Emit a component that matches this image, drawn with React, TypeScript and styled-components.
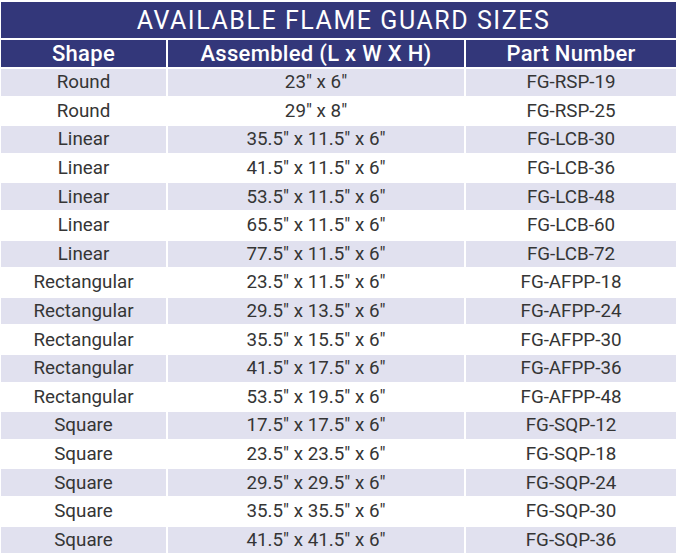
import React from 'react'
import styled, { createGlobalStyle } from 'styled-components'

const GlobalStyle = createGlobalStyle`
  html, body {
    margin: 0;
    padding: 0;
    background: #ffffff;
  }
  body {
    font-family: Roboto, "Liberation Sans", sans-serif;
  }
`

const NAVY = '#33377a'
const LAVENDER = '#e1e1ef'

const Page = styled.div`
  width: 679px;
  height: 557px;
  padding: 2px 3px 0 1px;
  box-sizing: border-box;
  background: #ffffff;
`

const Grid = styled.div`
  display: grid;
  grid-template-columns: 165px 296px 210px;
  grid-template-rows: 36px 27px;
  grid-auto-rows: 26.6px;
  column-gap: 2px;
  row-gap: 2px;
`

const Title = styled.div`
  grid-column: 1 / span 3;
  background: ${NAVY};
  color: #ffffff;
  display: flex;
  align-items: center;
  justify-content: center;
  font-size: 25px;
  font-weight: 400;
  letter-spacing: 1.55px;
  padding-left: 10px;
`

const HeadCell = styled.div`
  background: ${NAVY};
  color: #ffffff;
  display: flex;
  align-items: center;
  justify-content: center;
  font-size: 22px;
  font-weight: 500;
  letter-spacing: 0.3px;
`

const Cell = styled.div<{ $shaded: boolean }>`
  background: ${({ $shaded }) => ($shaded ? LAVENDER : '#ffffff')};
  color: #353535;
  display: flex;
  align-items: center;
  justify-content: center;
  font-size: 18.8px;
  font-weight: 400;
`

const rows: [string, string, string][] = [
  ['Round', '23″ x 6″', 'FG-RSP-19'],
  ['Round', '29″ x 8″', 'FG-RSP-25'],
  ['Linear', '35.5″ x 11.5″ x 6″', 'FG-LCB-30'],
  ['Linear', '41.5″ x 11.5″ x 6″', 'FG-LCB-36'],
  ['Linear', '53.5″ x 11.5″ x 6″', 'FG-LCB-48'],
  ['Linear', '65.5″ x 11.5″ x 6″', 'FG-LCB-60'],
  ['Linear', '77.5″ x 11.5″ x 6″', 'FG-LCB-72'],
  ['Rectangular', '23.5″ x 11.5″ x 6″', 'FG-AFPP-18'],
  ['Rectangular', '29.5″ x 13.5″ x 6″', 'FG-AFPP-24'],
  ['Rectangular', '35.5″ x 15.5″ x 6″', 'FG-AFPP-30'],
  ['Rectangular', '41.5″ x 17.5″ x 6″', 'FG-AFPP-36'],
  ['Rectangular', '53.5″ x 19.5″ x 6″', 'FG-AFPP-48'],
  ['Square', '17.5″ x 17.5″ x 6″', 'FG-SQP-12'],
  ['Square', '23.5″ x 23.5″ x 6″', 'FG-SQP-18'],
  ['Square', '29.5″ x 29.5″ x 6″', 'FG-SQP-24'],
  ['Square', '35.5″ x 35.5″ x 6″', 'FG-SQP-30'],
  ['Square', '41.5″ x 41.5″ x 6″', 'FG-SQP-36'],
]

export default function App() {
  return (
    <Page>
      <GlobalStyle />
      <Grid>
        <Title>AVAILABLE FLAME GUARD SIZES</Title>
        <HeadCell>Shape</HeadCell>
        <HeadCell>Assembled (L x W X H)</HeadCell>
        <HeadCell>Part Number</HeadCell>
        {rows.map((row, i) =>
          row.map((text, j) => (
            <Cell key={`${i}-${j}`} $shaded={i % 2 === 0}>
              {text}
            </Cell>
          ))
        )}
      </Grid>
    </Page>
  )
}
